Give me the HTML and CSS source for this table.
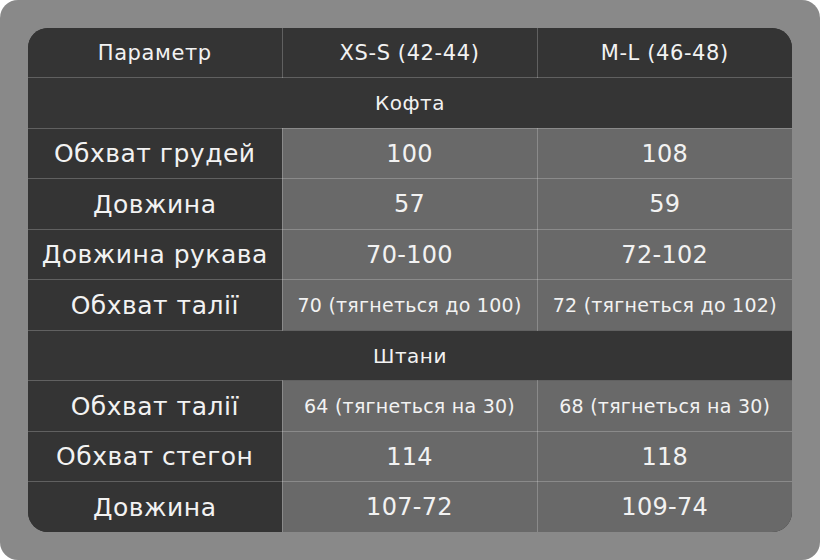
FILE: index.html
```html
<!DOCTYPE html>
<html lang="uk">
<head>
<meta charset="utf-8">
<link rel="stylesheet" href="styles.css">
</head>
<body>
<div class="frame">
  <div class="card">
    <table class="sizes">
      <colgroup><col class="c1"><col class="c2"><col class="c3"></colgroup>
      <tr class="head"><td>Параметр</td><td>XS-S (42-44)</td><td>M-L (46-48)</td></tr>
      <tr class="section"><td colspan="3">Кофта</td></tr>
      <tr><td class="label">Обхват грудей</td><td class="val">100</td><td class="val">108</td></tr>
      <tr><td class="label">Довжина</td><td class="val">57</td><td class="val">59</td></tr>
      <tr><td class="label">Довжина рукава</td><td class="val">70-100</td><td class="val">72-102</td></tr>
      <tr><td class="label">Обхват талії</td><td class="val small">70 (тягнеться до 100)</td><td class="val small">72 (тягнеться до 102)</td></tr>
      <tr class="section"><td colspan="3">Штани</td></tr>
      <tr><td class="label">Обхват талії</td><td class="val small">64 (тягнеться на 30)</td><td class="val small">68 (тягнеться на 30)</td></tr>
      <tr><td class="label">Обхват стегон</td><td class="val">114</td><td class="val">118</td></tr>
      <tr><td class="label">Довжина</td><td class="val">107-72</td><td class="val">109-74</td></tr>
    </table>
  </div>
</div>
</body>
</html>
```
FILE: styles.css
```css
html, body {
  margin: 0;
  padding: 0;
  background: #ffffff;
}
.frame {
  width: 820px;
  height: 560px;
  box-sizing: border-box;
  padding: 28px;
  background: #898989;
  border-radius: 18px;
}
.card {
  width: 764px;
  height: 504px;
  border-radius: 20px;
  overflow: hidden;
  background: #343434;
}
.sizes {
  width: 764px;
  height: 504px;
  border-collapse: collapse;
  border-style: hidden;
  table-layout: fixed;
  font-family: "DejaVu Sans", sans-serif;
  color: #f2f2f2;
}
.c1 { width: 254px; }
.c2 { width: 255px; }
.c3 { width: 255px; }
.sizes td {
  border: 1px solid rgba(255, 255, 255, 0.22);
  height: 49px;
  padding: 0;
  text-align: center;
  vertical-align: middle;
  font-size: 24px;
  letter-spacing: 0.3px;
  white-space: nowrap;
}
.head td {
  background: #343434;
  font-size: 21px;
  letter-spacing: 0.6px;
}
.section td {
  background: #353535;
  font-size: 20px;
  letter-spacing: 0.5px;
}
.sizes td.label {
  background: #343434;
  font-size: 25px;
  letter-spacing: 0.5px;
}
.sizes td.val {
  background: #696969;
}
.sizes td.small {
  font-size: 19px;
  letter-spacing: 0.25px;
}
```
